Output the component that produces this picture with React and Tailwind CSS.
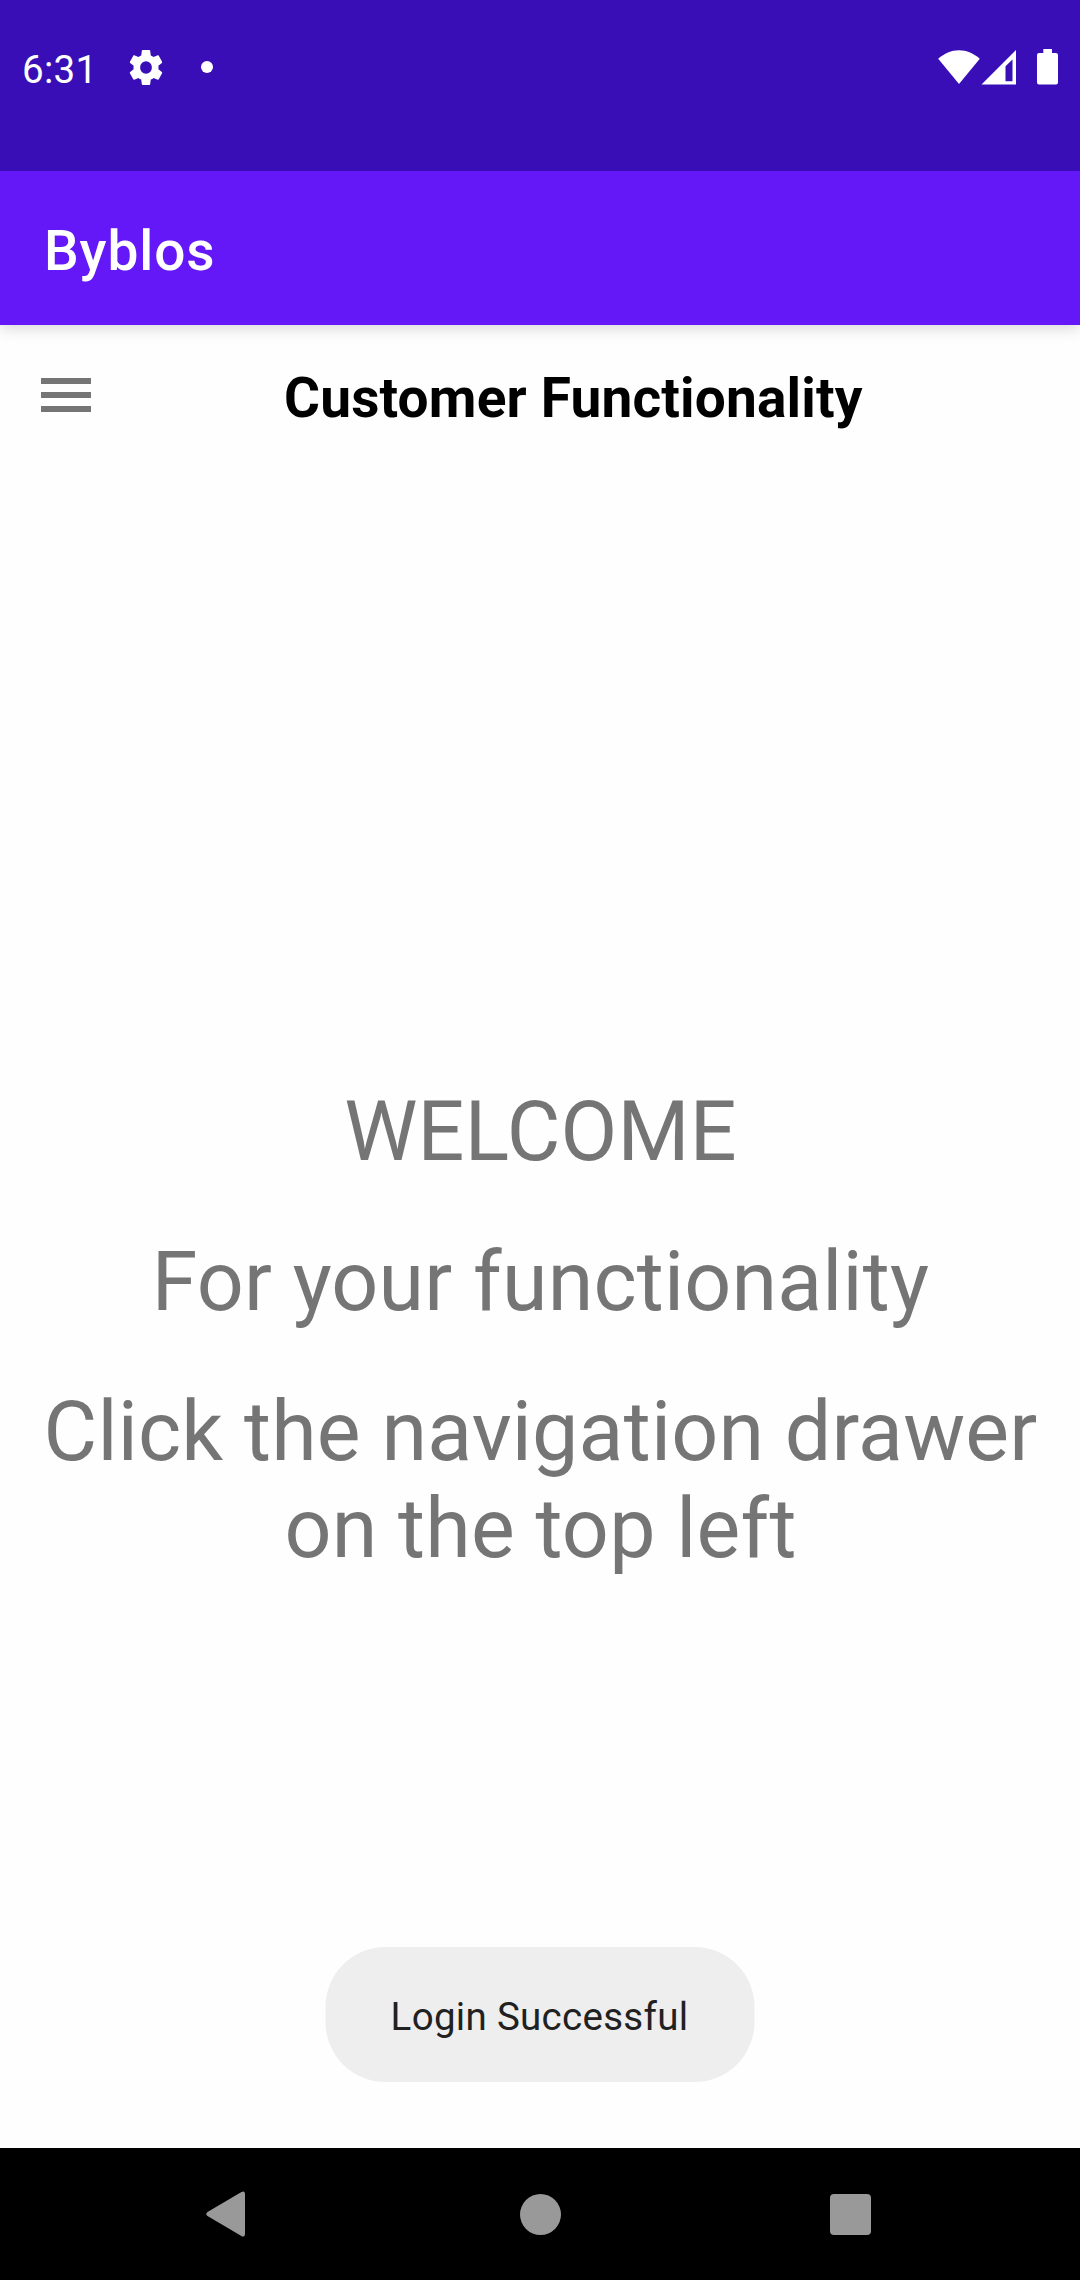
function StatusBar() {
  return (
    <header className="relative z-10 flex h-[171px] shrink-0 items-start justify-between bg-[#390eb7] pl-[22px] pr-[22px] pt-[49px] text-white">
      <div className="flex h-9 items-center">
        <span className="w-[107px] pt-[6px] text-[38.5px] leading-9 tracking-[0.3px]">6:31</span>
        <svg className="h-[35px] w-[34px]" viewBox="2.2 2.4 19.6 19.2" preserveAspectRatio="none" fill="currentColor">
          <path d="M19.14 12.94c.04-.3.06-.61.06-.94 0-.32-.02-.64-.07-.94l2.03-1.58c.18-.14.23-.41.12-.61l-1.92-3.32c-.12-.22-.37-.29-.59-.22l-2.39.96c-.5-.38-1.03-.7-1.62-.94L14.4 2.81c-.04-.24-.24-.41-.48-.41h-3.84c-.24 0-.43.17-.47.41l-.36 2.54c-.59.24-1.13.57-1.62.94l-2.39-.96c-.22-.08-.47 0-.59.22L2.74 8.87c-.12.21-.08.47.12.61l2.03 1.58c-.05.3-.09.63-.09.94s.02.64.07.94l-2.03 1.58c-.18.14-.23.41-.12.61l1.92 3.32c.12.22.37.29.59.22l2.39-.96c.5.38 1.03.7 1.62.94l.36 2.54c.05.24.24.41.48.41h3.84c.24 0 .44-.17.47-.41l.36-2.54c.59-.24 1.13-.56 1.62-.94l2.39.96c.22.08.47 0 .59-.22l1.92-3.32c.12-.22.07-.47-.12-.61l-2.02-1.58zM12 15.4a3.4 3.4 0 1 1 0-6.8 3.4 3.4 0 0 1 0 6.8z" />
        </svg>
        <span className="ml-[38px] size-3 rounded-full bg-white" />
      </div>
      <div className="flex h-9 items-start">
        <svg className="mt-px h-[35px] w-[42px]" viewBox="0 0 42 35" fill="currentColor">
          <path d="M.2 8.8C6.3 3.5 13.3.3 21 .3s14.700 3.200 20.800 8.500L21 34z" />
        </svg>
        <svg className="ml-px mr-px mt-px h-[35px] w-[35px]" viewBox="0 0 35 35" fill="currentColor">
          <path fillRule="evenodd" d="M35 0v34.500H.5zM31.500 9.500L24.500 16.200V31.200H31.500z" />
        </svg>
        <svg className="ml-5 h-[36px] w-[21px]" viewBox="0 0 21 36" fill="currentColor">
          <path d="M6.300 0h8.700v4h4a2 2 0 0 1 2 2v27.500a2 2 0 0 1-2 2H2a2 2 0 0 1-2-2V6a2 2 0 0 1 2-2h4.300z" />
        </svg>
      </div>
    </header>
  );
}

function Toast({ children }) {
  return (
    <div className="mx-auto mb-[66px] flex h-[135px] w-[429px] -translate-x-[0.5px] items-center justify-center rounded-[60px] bg-[#eeeeee] pt-1 text-[38.5px] tracking-[0.3px] text-[#212121]">
      {children}
    </div>
  );
}

function NavigationBar() {
  return (
    <nav className="grid h-[132px] shrink-0 grid-cols-[1fr_41px_1fr] items-center bg-black text-[#999999]">
      <svg className="ml-[206px] h-[46px] w-[39px]" viewBox="0 0 39 46" fill="currentColor">
        <path d="M35 1.300Q39-1.200 39 3.500V42.500Q39 47.200 35 44.700L1.500 25Q-1 23 1.500 21z" />
      </svg>
      <span className="size-[41px] rounded-full bg-[#999999]" />
      <span className="mr-[209px] size-[41px] justify-self-end rounded-[4px] bg-[#999999]" />
    </nav>
  );
}

export default function App() {
  return (
    <div className="flex h-[2280px] w-[1080px] flex-col overflow-hidden bg-[#fefefe] font-['Roboto',sans-serif]">
      <StatusBar />
      <div className="flex h-[154px] shrink-0 items-center bg-[#6418f7] pl-[44px] pt-[7px] text-[55px] font-medium tracking-[0.9px] text-white shadow-[0_3px_14px_rgba(0,0,0,0.16)]">
        Byblos
      </div>
      <main className="flex flex-1 flex-col">
        <div className="flex items-start pl-[41px] pt-[41px]">
          <button className="mt-3 flex w-[50px] flex-col gap-2" aria-label="Open navigation drawer">
            <span className="h-[6px] w-full bg-[#757575]" />
            <span className="h-[6px] w-full bg-[#757575]" />
            <span className="h-[6px] w-full bg-[#757575]" />
          </button>
          <h1 className="ml-[193px] text-[55px] font-bold leading-[65px] tracking-[0.17px] text-black">Customer Functionality</h1>
        </div>
        <div className="mt-[652px] flex flex-col gap-[53px] pl-px text-center text-[82.5px] leading-[97px] tracking-[0.2px] text-[#757575]">
          <p>WELCOME</p>
          <p>For your functionality</p>
          <p>Click the navigation drawer<br />on the top left</p>
        </div>
        <div className="mt-auto">
          <Toast>Login Successful</Toast>
        </div>
      </main>
      <NavigationBar />
    </div>
  );
}
